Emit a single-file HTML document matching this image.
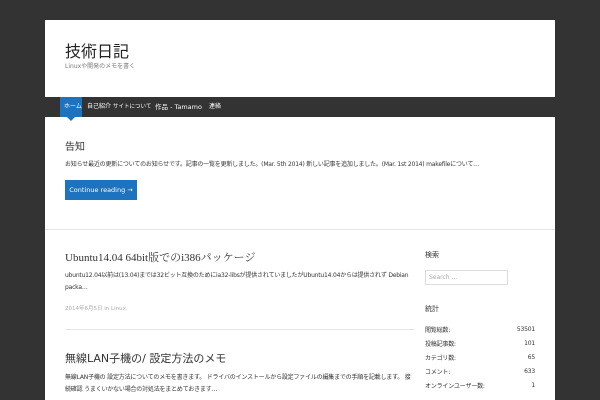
<!DOCTYPE html>
<html><head><meta charset="utf-8"><style>
*{margin:0;padding:0;box-sizing:border-box}
body{width:600px;height:400px;background:#333;font-family:"DejaVu Sans","Noto Sans CJK JP",sans-serif;overflow:hidden;position:relative;color:#333}
.page{position:absolute;left:45px;top:20px;width:510px;height:380px;background:#fff;overflow:hidden}
.a{position:absolute;white-space:nowrap}
.nav{position:absolute;left:0;top:77px;width:510px;height:20px;background:#333}
.nav span{position:absolute;top:0;line-height:20px;font-size:6.5px;color:#fff;white-space:nowrap}
.p{font-size:6px;color:#333;letter-spacing:-0.2px}
.w{white-space:normal;line-height:12px;overflow:hidden}
</style></head><body>
<div class="page">
<div class="a" style="left:20px;top:22px;font-size:16px;line-height:20px;color:#222">技術日記</div>
<div class="a" style="left:20px;top:43px;font-size:6px;line-height:8px;color:#777">Linuxや開発のメモを書く</div>
<div class="nav">
<div style="position:absolute;left:15px;top:0;width:22px;height:20px;background:#1e73be"></div>
<div style="position:absolute;left:22px;top:20px;border:4px solid transparent;border-top-color:#1e73be"></div>
<span style="left:19px;font-size:6px">ホーム</span><span style="left:42px;font-size:6px">自己紹介</span><span style="left:68px;font-size:5.5px">サイトについて</span><span style="left:110px">作品 - Tamamo</span><span style="left:164px;font-size:6px">連絡</span>
</div>
<div class="a" style="left:20px;top:118px;font-size:10px;color:#333">告知</div>
<div class="a p w" style="left:20px;top:139px;width:420px;height:12px">お知らせ最近の更新についてのお知らせです。記事の一覧を更新しました。(Mar. 5th 2014) 新しい記事を追加しました。(Mar. 1st 2014) makefileについて…</div>
<div class="a" style="left:20px;top:160px;width:72px;height:20px;background:#1e73be;color:#fff;font-size:6.5px;line-height:20px;text-align:center">Continue reading →</div>
<div style="position:absolute;left:0;top:209px;width:510px;border-top:1px solid #e5e5e5"></div>
<div class="a" style="left:20px;top:229px;font-size:11px;color:#333;font-family:'Liberation Serif','Noto Serif CJK SC',serif">Ubuntu14.04 64bit版でのi386パッケージ</div>
<div class="a p w" style="left:20px;top:250px;width:350px;height:24px">ubuntu12.04以前は(13.04)までは32ビット互換のためにia32-libsが提供されていましたがUbuntu14.04からは提供されず Debian packa…</div>
<div class="a" style="left:20px;top:284px;font-size:5.5px;color:#aaa">2014年6月5日 in Linux.</div>
<div style="position:absolute;left:20px;top:309px;width:350px;border-top:1px solid #e5e5e5"></div>
<div class="a" style="left:20px;top:330px;font-size:11px;color:#333">無線LAN子機の/ 設定方法のメモ</div>
<div class="a p w" style="left:20px;top:352px;width:350px;height:24px">無線LAN子機の 設定方法についてのメモを書きます。 ドライバのインストールから設定ファイルの編集までの手順を記載します。 接続確認 うまくいかない場合の対処法をまとめておきます…</div>
<div class="a" style="left:380px;top:230px;font-size:7px">検索</div>
<div class="a" style="left:380px;top:250px;width:83px;height:15px;border:1px solid #ddd;font-size:6px;color:#aaa;padding:3px 3px">Search …</div>
<div class="a" style="left:380px;top:284px;font-size:7px">統計</div>
<div class="a p" style="left:380px;top:305px">閲覧総数:</div><div class="a p" style="left:444px;top:306px;width:46px;text-align:right">53501</div>
<div class="a p" style="left:380px;top:319px">投稿記事数:</div><div class="a p" style="left:444px;top:320px;width:46px;text-align:right">101</div>
<div class="a p" style="left:380px;top:333px">カテゴリ数:</div><div class="a p" style="left:444px;top:334px;width:46px;text-align:right">65</div>
<div class="a p" style="left:380px;top:347px">コメント:</div><div class="a p" style="left:444px;top:348px;width:46px;text-align:right">633</div>
<div class="a p" style="left:380px;top:361px">オンラインユーザー数:</div><div class="a p" style="left:444px;top:362px;width:46px;text-align:right">1</div>
</div>
</body></html>
